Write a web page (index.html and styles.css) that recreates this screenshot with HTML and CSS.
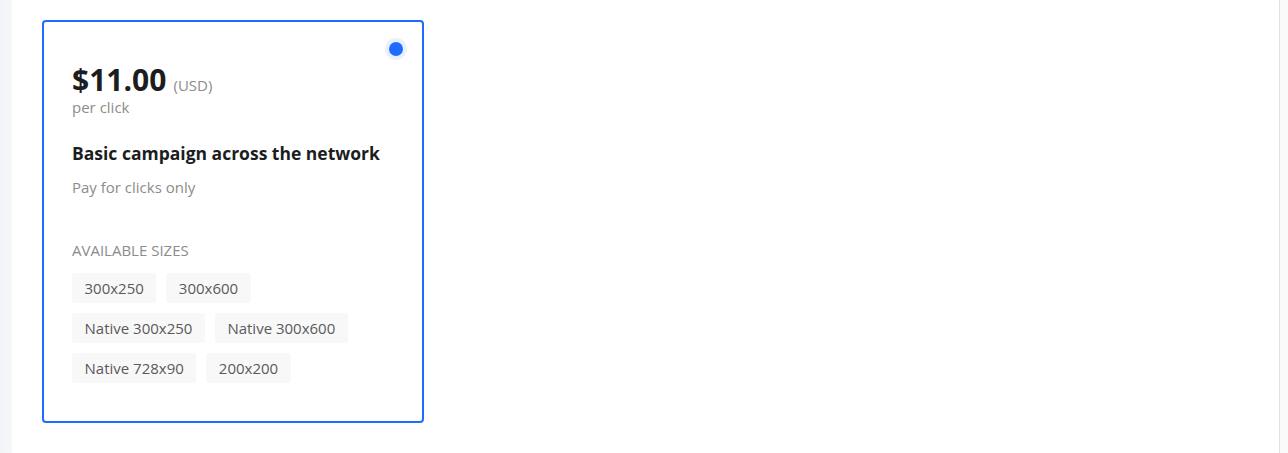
FILE: index.html
```html
<!DOCTYPE html>
<html lang="en">
<head>
<meta charset="utf-8">
<title>Campaign</title>
<link rel="stylesheet" href="styles.css">
</head>
<body>
<div class="page">
  <main class="panel">
    <section class="card">
      <span class="radio"><span class="radio-dot"></span></span>
      <div class="price"><span class="amount">$11.00</span> <span class="currency">(USD)</span></div>
      <div class="unit">per click</div>
      <h2 class="title">Basic campaign across the network</h2>
      <p class="desc">Pay for clicks only</p>
      <div class="sizes-label">AVAILABLE SIZES</div>
      <div class="chips">
        <span class="chip">300x250</span>
        <span class="chip">300x600</span>
        <span class="chip">Native 300x250</span>
        <span class="chip">Native 300x600</span>
        <span class="chip">Native 728x90</span>
        <span class="chip">200x200</span>
      </div>
    </section>
  </main>
</div>
</body>
</html>
```
FILE: styles.css
```css
* { box-sizing: border-box; }
html, body { margin: 0; padding: 0; }
body {
  background: #f5f6f8;
  font-family: "Open Sans", "Noto Sans", sans-serif;
  width: 1288px;
  height: 453px;
  overflow: hidden;
}
.page {
  display: flex;
  height: 453px;
  padding-left: 12px;
  background: linear-gradient(to right, #f3f4f7 0, #f6f7f9 8px, #fafafb 12px);
}
.panel {
  width: 1268px;
  height: 453px;
  background: #fff;
  border-right: 1px solid #e2e2e2;
  box-shadow: -3px 0 6px rgba(0,0,0,0.025);
  padding: 20px 0 0 30px;
}
.card {
  position: relative;
  width: 382px;
  height: 403px;
  border: 2px solid #1f6bff;
  border-radius: 4px;
  padding: 43px 28px 0 28px;
}
.radio {
  position: absolute;
  top: 16px;
  right: 15px;
  width: 22px;
  height: 22px;
  border-radius: 50%;
  background: #e8effd;
  display: flex;
  align-items: center;
  justify-content: center;
}
.radio-dot {
  width: 14px;
  height: 14px;
  border-radius: 50%;
  background: #1f6bff;
}
.price {
  line-height: 30px;
  color: #1b1d21;
}
.amount {
  font-size: 30px;
  font-weight: 700;
}
.currency {
  margin-left: 3px;
  font-size: 15px;
  color: #8c8c8c;
}
.unit {
  font-size: 15px;
  line-height: 14px;
  color: #8c8c8c;
}
.title {
  margin: 26px 0 0 0;
  font-size: 17.5px;
  line-height: 26px;
  font-weight: 700;
  color: #1b1d21;
}
.desc {
  margin: 11px 0 0 0;
  font-size: 15px;
  line-height: 20px;
  color: #8c8c8c;
}
.sizes-label {
  margin-top: 43px;
  font-size: 15px;
  line-height: 20px;
  color: #8c8c8c;
}
.chips {
  margin-top: 13px;
  max-width: 300px;
  display: flex;
  flex-wrap: wrap;
  gap: 10px;
}
.chip {
  height: 30px;
  line-height: 30px;
  padding: 0 12.5px;
  background: #f8f8f8;
  border-radius: 3px;
  font-size: 15px;
  color: #5a5a5a;
}
```
